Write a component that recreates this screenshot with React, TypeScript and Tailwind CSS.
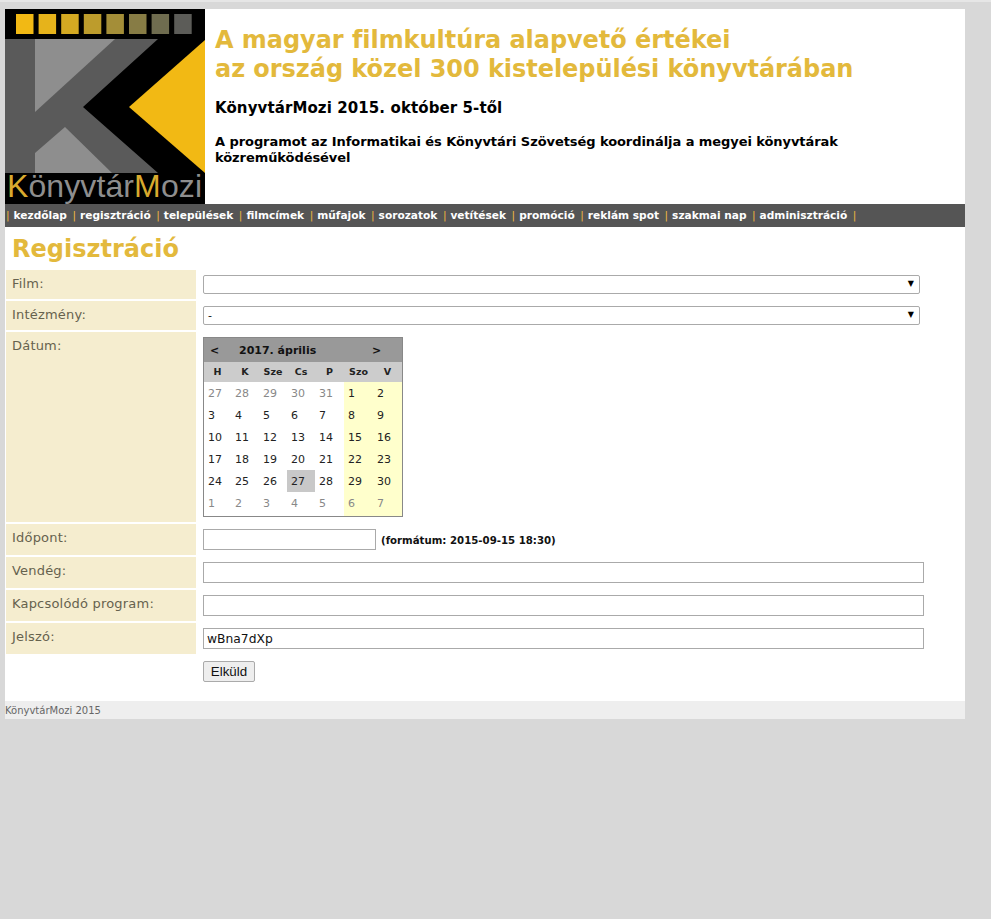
const verdana = { fontFamily: '"DejaVu Sans", Verdana, sans-serif' }

const navItems = [
  'kezdőlap',
  'regisztráció',
  'települések',
  'filmcímek',
  'műfajok',
  'sorozatok',
  'vetítések',
  'promóció',
  'reklám spot',
  'szakmai nap',
  'adminisztráció',
]

const weekdays = ['H', 'K', 'Sze', 'Cs', 'P', 'Szo', 'V']

const days = [
  27, 28, 29, 30, 31, 1, 2, 3, 4, 5, 6, 7, 8, 9, 10, 11, 12, 13, 14, 15, 16, 17, 18, 19, 20, 21, 22, 23, 24, 25, 26,
  27, 28, 29, 30, 1, 2, 3, 4, 5, 6, 7,
]

const squares = ['#f2b914', '#e6b31b', '#d4a922', '#bd9c2c', '#a48e38', '#877c45', '#6f6c4f', '#5c5c58']

function Logo() {
  return (
    <svg width="200" height="195" viewBox="0 0 200 195" className="block shrink-0">
      <rect width="200" height="195" fill="#000" />
      {squares.map((c, i) => (
        <rect key={c} x={11 + i * 22.6} y="5" width="17.5" height="20" fill={c} />
      ))}
      <polygon points="0,30 153,30 78,98 153,164 0,164" fill="#5a5a5a" />
      <polygon points="30,30 110,30 30,103" fill="#8e8e8e" />
      <polygon points="30,144 60,118 107,164 30,164" fill="#8e8e8e" />
      <polygon points="200,31 124,98 200,164" fill="#f2b914" />
      <text x="2" y="188" fontSize="32" textLength="195" fontFamily='"Liberation Sans", Arial, sans-serif' fill="#8e8e8e">
        <tspan fill="#d9aa2e">K</tspan>önyvtár<tspan fill="#d9aa2e">M</tspan>ozi
      </text>
    </svg>
  )
}

function Calendar() {
  return (
    <div className="w-[200px] border border-[#888] bg-white text-[11px] text-[#222]" style={verdana}>
      <div className="flex h-[24px] items-center bg-[#999] pt-[2px] font-bold text-[#111]">
        <span className="ml-[6px] w-[29px]">&lt;</span>
        <span className="w-[133px]">2017. április</span>
        <span>&gt;</span>
      </div>
      <div className="grid h-[20px] grid-cols-[27px_28px_28px_28px_29px_29px_29px] items-center bg-[#ccc] text-center text-[9.5px] font-bold">
        {weekdays.map((d) => (
          <span key={d}>{d}</span>
        ))}
      </div>
      <div className="grid grid-cols-[27px_28px_28px_28px_29px_29px_29px]">
        {days.map((d, i) => {
          const muted = i < 5 || i > 34
          const weekend = i % 7 > 4
          const selected = i === 31
          return (
            <span
              key={i}
              className={
                'flex items-start pl-[4px] pt-[5px] leading-[14px] ' +
                (i > 34 ? 'h-[24px] ' : 'h-[22px] ') +
                (weekend ? 'bg-[#ffffcc] ' : '') +
                (selected ? 'bg-[#c8c8c8] ' : '') +
                (muted ? 'text-[#888]' : '')
              }
            >
              {d}
            </span>
          )
        })}
      </div>
    </div>
  )
}

function Row({ label, h, children }: { label: string; h: string; children?: React.ReactNode }) {
  return (
    <div className={'flex ' + h}>
      <div className="ml-px w-[190px] shrink-0 bg-[#f5edcf] pl-[6px] pt-[6px] text-[13px] leading-4 tracking-[0.2px] text-[#66624e]">
        {label}
      </div>
      <div className="ml-[7px] pt-[5px]">{children}</div>
    </div>
  )
}

function Select({ value }: { value?: string }) {
  return (
    <div className="relative h-[19px] w-[717px] rounded-[2px] border border-[#aaa] bg-white pl-[4px] text-[11px] leading-[17px] text-[#111]">
      {value}
      <span className="absolute right-[5px] top-[1px] text-[8px] leading-[14px] text-black">▼</span>
    </div>
  )
}

export default function App() {
  return (
    <div className="min-h-[919px] border-t-2 border-[#e6e6e6] bg-[#d8d8d8] pl-[5px] pt-[7px]" style={verdana}>
      <div className="w-[960px] bg-white">
        <header className="flex h-[195px]">
          <Logo />
          <div className="pl-[10px]">
            <h2 className="mt-[17px] text-[24px] font-bold leading-[29px] tracking-[-0.05px] text-[#e3b93c]">
              A magyar filmkultúra alapvető értékei
              <br />
              az ország közel 300 kistelepülési könyvtárában
            </h2>
            <p className="mt-[15px] text-[15px] font-bold leading-[18px] tracking-[0.1px] text-black">
              KönyvtárMozi 2015. október 5-től
            </p>
            <p className="mt-[17px] w-[700px] text-[13px] font-bold leading-4 tracking-[-0.07px] text-black">
              A programot az Informatikai és Könyvtári Szövetség koordinálja a megyei könyvtárak közreműködésével
            </p>
          </div>
        </header>

        <nav className="flex h-[23px] items-center bg-[#555] pl-px text-[10.6px] font-bold text-white">
          {navItems.map((item) => (
            <span key={item} className="flex">
              <span className="mr-[4px] font-normal text-[#f0b840]">|</span>
              <span className="mr-[5.5px]">{item}</span>
            </span>
          ))}
          <span className="font-normal text-[#f0b840]">|</span>
        </nav>

        <h1 className="ml-[7px] h-[43px] pt-[7px] text-[24px] font-bold leading-[30px] text-[#e3b93c]">Regisztráció</h1>

        <div className="flex flex-col gap-[2px]">
          <Row label="Film:" h="h-[29px]">
            <Select />
          </Row>
          <Row label="Intézmény:" h="h-[29px]">
            <Select value="-" />
          </Row>
          <Row label="Dátum:" h="h-[190px]">
            <Calendar />
          </Row>
          <Row label="Időpont:" h="h-[31px]">
            <div className="flex items-center">
              <input className="block h-[21px] w-[173px] border border-[#aaa] bg-white" />
              <span className="ml-[5px] mt-[3px] text-[10.2px] font-bold text-[#111]">(formátum: 2015-09-15 18:30)</span>
            </div>
          </Row>
          <Row label="Vendég:" h="h-[31px]">
            <input className="block h-[21px] w-[721px] border border-[#aaa] bg-white" />
          </Row>
          <Row label="Kapcsolódó program:" h="h-[31px]">
            <input className="block h-[21px] w-[721px] border border-[#aaa] bg-white" />
          </Row>
          <Row label="Jelszó:" h="h-[31px]">
            <input
              defaultValue="wBna7dXp"
              className="block h-[21px] w-[721px] border border-[#aaa] bg-white pl-[3px] text-[12.3px] text-[#111] outline-none"
            />
          </Row>
        </div>

        <div className="h-[47px] pl-[198px] pt-[5px]">
          <button
            className="h-[21px] w-[52px] rounded-[2px] border border-[#aaa] bg-[#eee] text-[13.33px] leading-none text-[#111]"
            style={{ fontFamily: '"Liberation Sans", Arial, sans-serif' }}
          >
            Elküld
          </button>
        </div>

        <footer className="h-[18px] bg-[#eee] text-[10px] leading-[20px] text-[#666]">KönyvtárMozi 2015</footer>
      </div>
    </div>
  )
}
